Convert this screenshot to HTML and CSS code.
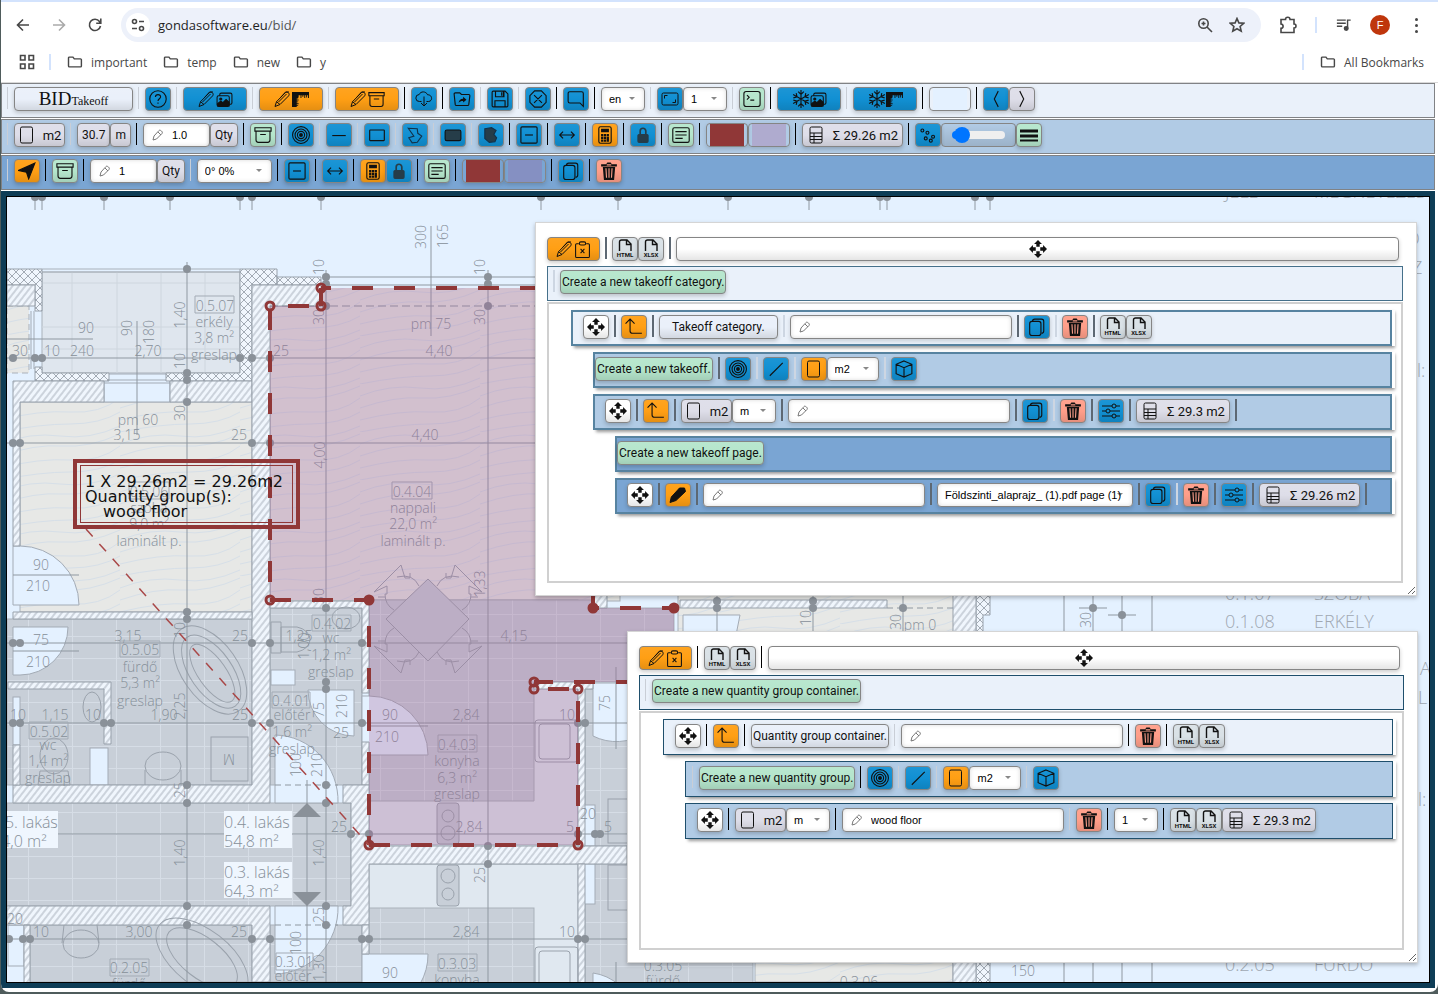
FILE: index.html
```html
<!DOCTYPE html>
<html lang="en">
<head>
    <meta charset="UTF-8">
    <meta name="viewport" content="width=device-width, initial-scale=1.0">
    <title>BID Takeoff</title>
    <link rel="stylesheet" href="styles.css">
</head>
<body>
    <!-- icon set -->
    <svg class="sprite" aria-hidden="true">
        <symbol id="back" viewBox="0 0 16 16"><path d="M14 8H3M8 2.500L2.500 8 8 13.500"/></symbol>
        <symbol id="forward" viewBox="0 0 16 16"><path d="M2 8h11M8 2.500L13.500 8 8 13.500"/></symbol>
        <symbol id="reload" viewBox="0 0 16 16"><path d="M13.500 9A5.600 5.600 0 1 1 12.500 4.500L13.500 6M13.800 1.500v4.700H9.200"/></symbol>
        <symbol id="tune" viewBox="0 0 16 16"><circle cx="4.500" cy="4.500" r="2"/><circle cx="11.500" cy="11.500" r="2"/><path d="M9 4.500h5M2 11.500h5"/></symbol>
        <symbol id="zoomin" viewBox="0 0 16 16"><circle cx="6.500" cy="6.500" r="4.700"/><path d="M10 10l5 5M4.500 6.500h4M6.500 4.500v4"/></symbol>
        <symbol id="star" viewBox="0 0 16 16"><path d="M8 1.500l1.900 4.400 4.800.4-3.600 3.200 1.100 4.700L8 11.700l-4.200 2.500 1.100-4.700L1.300 6.300l4.800-.4z"/></symbol>
        <symbol id="puzzle" viewBox="0 0 18 18"><path d="M2 3.500h4.500a2 2 0 0 1 4.500 0h4v4.500a2 2 0 0 1 0 4v4.500H2v-4.200c2.800-.3 2.800-4 0-4.300z"/></symbol>
        <symbol id="media" viewBox="0 0 18 16"><path d="M1 2.500h10M1 6h10M1 9.500h6M13 12V2.500h3.500"/><circle cx="11.500" cy="12" r="2" fill="currentColor"/></symbol>
        <symbol id="grid" viewBox="0 0 16 16"><path d="M1.500 1.500h4.500V6H1.500zM10 1.500h4.500V6H10zM1.500 10h4.500v4.500H1.500zM10 10h4.500v4.500H10z"/></symbol>
        <symbol id="folder" viewBox="0 0 18 16"><path d="M1.700 3.500a1 1 0 0 1 1-1h4l1.500 2h7a1 1 0 0 1 1 1v7a1 1 0 0 1-1 1H2.700a1 1 0 0 1-1-1z"/></symbol>

        <symbol id="help" viewBox="0 0 16 16"><circle cx="8" cy="8" r="7.300"/><path d="M5.700 6.200C5.900 3.300 10.500 3.600 10.300 6.200 10.200 7.700 8 7.900 8 9.800M8 11v1.300"/></symbol>
        <symbol id="pen" viewBox="0 0 18 16"><path d="M1 15.500l1.500-4.800L11 2c1-1.200 2.500-1 3.400-.2 1 .9 1 2.200.1 3.200L6 13.500zM2.500 10.700L6 13.500M6.500 6.500L11.500 1h3.500M4.500 11l8-8"/></symbol>
        <symbol id="penfill" viewBox="0 0 18 16"><path fill="currentColor" d="M1 15.500l1.300-5.500L10.500 1h5l1 3.500L7 13.500z"/></symbol>
        <symbol id="images" viewBox="0 0 16 16"><rect x="1" y="4.500" width="11.500" height="10" rx="1.500"/><path d="M3.500 4.500V3.500a1.500 1.500 0 0 1 1.500-1.500h8.500a1.500 1.500 0 0 1 1.500 1.500v7.500a1.500 1.500 0 0 1-1.500 1.500h-1"/><path fill="currentColor" d="M1.500 12l3-2.500 2 1.500 3-3 2.800 2.500v3.500H1.500z"/><circle cx="4.500" cy="7.500" r="1" fill="currentColor"/></symbol>
        <symbol id="ruler" viewBox="0 0 18 16"><path fill="currentColor" stroke="none" d="M0 0h18v6.500h-1V3.500h-1V6h-1V3.500h-1v3h-1v-3h-1V5h-1V3.500h-1v3H9v-3H7V6h-.5v1H5v1h2v1H5v1h1.500v1H5v1h2v1H5v1h1.500v1H5v1H0z"/></symbol>
        <symbol id="archive" viewBox="0 0 16 16"><path d="M.8 1.500h14.400v3H.8zM1.800 4.500v8a2 2 0 0 0 2 2h8.400a2 2 0 0 0 2-2v-8M5.500 7.500h5"/></symbol>
        <symbol id="cloud" viewBox="0 0 18 16"><path d="M6.500 10.500H4.500a3.500 3.500 0 0 1-.3-7C5.500 0 11 0 12.600 3.800c5-.3 5.300 6.700.9 6.700h-2M9 5.500V15M6 12l3 3 3-3"/></symbol>
        <symbol id="share" viewBox="0 0 16 16"><path d="M1 3.500a1 1 0 0 1 1-1h4l1.500 1.500H14a1 1 0 0 1 1 1l-1 8a1 1 0 0 1-1 .8H3a1 1 0 0 1-1-.8z"/><path fill="currentColor" stroke="none" d="M5 11.500c.2-2.500 1.500-3.700 4-3.800V6l3 2.600-3 2.600V9.700c-2 0-3 .5-4 1.800z"/></symbol>
        <symbol id="save" viewBox="0 0 16 16"><path d="M1 2a1 1 0 0 1 1-1h10.500L15 3.500V14a1 1 0 0 1-1 1H2a1 1 0 0 1-1-1zM3.500 15V9.500h9V15M4 1v5h7.500V1M9.500 2v3M11 1v5"/></symbol>
        <symbol id="octagon" viewBox="0 0 16 16"><path d="M5 .8h6L15.200 5v6L11 15.200H5L.8 11V5zM4.500 4.500l7 7M11.500 4.500l-7 7"/></symbol>
        <symbol id="chat" viewBox="0 0 16 16"><path d="M14.500 14.500l-3-3h-9a1.500 1.500 0 0 1-1.500-1.500V3a1.500 1.500 0 0 1 1.500-1.500H13A1.500 1.500 0 0 1 14.500 3z"/></symbol>
        <symbol id="full" viewBox="0 0 18 16"><rect x="1" y="2" width="16" height="12" rx="1.500"/><path d="M3.500 7.500v-3h3M14.500 8.500v3h-3"/></symbol>
        <symbol id="terminal" viewBox="0 0 16 16"><rect x=".8" y="1.300" width="14.400" height="13.400" rx="2"/><path d="M3.500 4.500l2 2-2 2M6.500 9h3.500"/></symbol>
        <symbol id="snow" viewBox="0 0 16 16"><path d="M8 0v16M1 4l14 8M1 12l14-8M5.500 1.500L8 4l2.500-2.500M5.500 14.500L8 12l2.500 2.500M1.200 7l3.300-1-.8-3.300M14.800 9l-3.300 1 .8 3.300M1.200 9l3.300 1-.8 3.300M14.800 7l-3.300-1 .8-3.300"/></symbol>
        <symbol id="left" viewBox="0 0 16 16"><path d="M10 1L6.500 8 10 15"/></symbol>
        <symbol id="right" viewBox="0 0 16 16"><path d="M6 1l3.500 7L6 15"/></symbol>
        <symbol id="portrait" viewBox="0 0 16 18"><rect x="1.500" y="1" width="12" height="16" rx="1.500"/></symbol>
        <symbol id="rings" viewBox="0 0 16 16"><circle cx="8" cy="8" r="7.500"/><circle cx="8" cy="8" r="5.300"/><circle cx="8" cy="8" r="3.200"/><circle cx="8" cy="8" r="1.200" fill="currentColor"/></symbol>
        <symbol id="hline" viewBox="0 0 16 16"><path d="M2 8.500h12"/></symbol>
        <symbol id="slash" viewBox="0 0 16 16"><path d="M2.500 14L14 2.500"/></symbol>
        <symbol id="rect" viewBox="0 0 16 16"><rect x="1.500" y="3.500" width="13" height="9.500" rx=".5"/></symbol>
        <symbol id="rectfill" viewBox="0 0 16 16"><rect x="1" y="3.500" width="14" height="9.500" rx="1.500" fill="#263d49"/></symbol>
        <symbol id="poly" viewBox="0 0 16 16"><path d="M2 2l8 .5.500 4 3.500 2.500-4 5.500-4.500.5-3-4.500L7 9z" stroke="#12324a"/></symbol>
        <symbol id="polyfill" viewBox="0 0 16 16"><path fill="#263d49" stroke="#12324a" d="M2.500 2.500l6-1 4 2.500-2 3.500 2.500 3-1.500 3.500-5 .5-4-3.500z"/></symbol>
        <symbol id="minus" viewBox="0 0 16 16"><rect x=".8" y=".8" width="14.400" height="14.400" rx="1"/><path d="M4.500 8h7"/></symbol>
        <symbol id="arrows" viewBox="0 0 16 16"><path d="M1.500 8h13M4.500 5l-3 3 3 3M11.500 5l3 3-3 3"/></symbol>
        <symbol id="calc" viewBox="0 0 16 16"><rect x="2.500" y=".7" width="11" height="14.600" rx="1.500"/><path fill="currentColor" stroke="none" d="M4.500 2.500h7v3h-7zM4.500 7h2v2h-2zM7 7h2v2H7zM9.500 7h2v2h-2zM4.500 9.500h2v2h-2zM7 9.500h2v2H7zM4.500 12h2v2h-2zM7 12h2v2H7zM9.500 9.500h2V14h-2z"/></symbol>
        <symbol id="lock" viewBox="0 0 16 16"><rect x="3.500" y="7.500" width="9" height="7" rx="1" fill="#263d49" stroke="#263d49"/><path stroke="#263d49" stroke-width="1.500" d="M5.500 7V4.500a2.500 2.500 0 0 1 5 0V7"/></symbol>
        <symbol id="card" viewBox="0 0 16 16"><rect x=".7" y="1.500" width="14.600" height="13" rx="1.500"/><path d="M3 5h10M3 8h10M3 11h6.500"/></symbol>
        <symbol id="table" viewBox="0 0 14 18"><rect x="1" y="1" width="12" height="16" rx="1.500"/><path d="M1 7h12M1 10.500h12M1 13.500h12M5 7v10"/></symbol>
        <symbol id="dots" viewBox="0 0 16 16"><circle cx="3" cy="4" r="1.300"/><circle cx="7.500" cy="6" r="1.300"/><circle cx="6" cy="11" r="1.300"/><circle cx="12.500" cy="9.500" r="1.300"/><circle cx="10.500" cy="13" r="1.300"/></symbol>
        <symbol id="bars" viewBox="0 0 18 16"><path stroke-width="3" d="M0 4h18M0 9h18"/><path stroke-width="2" d="M0 13.500h18"/></symbol>
        <symbol id="send" viewBox="0 0 16 16"><path fill="currentColor" d="M15 1L9.500 15 7.500 9 .5 7.500z"/></symbol>
        <symbol id="copy" viewBox="0 0 16 16"><rect x="1.500" y="3" width="10" height="12.500" rx="2"/><path d="M4 3a2 2 0 0 1 2-2h6a2 2 0 0 1 2 2v8.500a2 2 0 0 1-2 2"/></symbol>
        <symbol id="trash" viewBox="0 0 16 16"><path fill="currentColor" stroke="none" d="M1 2h4.500l1-1.500h3L10.500 2H15v2H1zM2.500 4.500h11L12.500 16h-9z"/><path stroke="#f89c88" d="M5.300 5.500l.5 8.500M8 5.500V14M10.700 5.500l-.5 8.500M6 2.500h4"/></symbol>
        <symbol id="clip" viewBox="0 0 16 16"><path d="M4.500 2.500h-2a1 1 0 0 0-1 1v11a1 1 0 0 0 1 1h11a1 1 0 0 0 1-1v-11a1 1 0 0 0-1-1h-2"/><rect x="5" y=".8" width="6" height="3" rx="1.500"/><path d="M6.200 7.500l3.600 4M9.800 7.500l-3.600 4"/></symbol>
        <symbol id="file" viewBox="0 0 18 20"><path stroke-width="1.400" d="M3.500 12V3a2 2 0 0 1 2-2H11l4 4v7M10.500 1.500v4h4"/></symbol>
        <symbol id="move" viewBox="0 0 16 16"><path fill="currentColor" stroke="none" d="M8 0l3.500 3.500H9.500v2.500H6.500V3.500h-2zM8 16l3.500-3.500H9.500V10H6.500v2.500h-2zM0 8l3.500-3.500v2H6v3H3.500v2zM16 8l-3.500-3.500v2H10v3h2.500v2z"/></symbol>
        <symbol id="up" viewBox="0 0 16 16"><path d="M4.500 1v10.500a2 2 0 0 0 2 2H15M.5 5l4-4 4 4"/></symbol>
        <symbol id="box" viewBox="0 0 16 16"><path d="M8 .8l7 3v8.400l-7 3-7-3V3.800zM1 3.800l7 3 7-3M8 6.800v8.400"/></symbol>
        <symbol id="sliders" viewBox="0 0 18 16"><path d="M0 3h10M14 3h4M0 8h4M8 8h10M0 13h10M14 13h4"/><circle cx="12" cy="3" r="2"/><circle cx="6" cy="8" r="2"/><circle cx="12" cy="13" r="2"/></symbol>
    </svg>

    <div class="browser">
        <header class="chrome">
            <div class="nav">
                <button class="tool" aria-label="Back"><svg><use href="#back"/></svg></button>
                <button class="tool dim" aria-label="Forward"><svg><use href="#forward"/></svg></button>
                <button class="tool" aria-label="Reload"><svg><use href="#reload"/></svg></button>
                <div class="omnibox">
                    <span class="site"><svg><use href="#tune"/></svg></span>
                    <span class="url">gondasoftware.eu<span class="path">/bid/</span></span>
                    <button class="tool" aria-label="Zoom"><svg><use href="#zoomin"/></svg></button>
                    <button class="tool" aria-label="Bookmark"><svg><use href="#star"/></svg></button>
                </div>
                <button class="tool ext" aria-label="Extensions"><svg><use href="#puzzle"/></svg></button>
                <span class="divider"></span>
                <button class="tool" aria-label="Media"><svg><use href="#media"/></svg></button>
                <button class="avatar">F</button>
                <button class="kebab" aria-label="Menu"><i></i><i></i><i></i></button>
            </div>
            <nav class="bookmarks">
                <svg><use href="#grid"/></svg>
                <span class="divider"></span>
                <a href="#"><svg><use href="#folder"/></svg>important</a>
                <a href="#"><svg><use href="#folder"/></svg>temp</a>
                <a href="#"><svg><use href="#folder"/></svg>new</a>
                <a href="#"><svg><use href="#folder"/></svg>y</a>
                <span class="grow"></span>
                <span class="divider"></span>
                <a class="all" href="#"><svg><use href="#folder"/></svg>All Bookmarks</a>
            </nav>
        </header>

        <main class="app">
            <div class="toolbar tone1">
                <i class="sep light"></i>
                <button class="btn plain logo"><span class="bid">BID</span><span class="takeoff">Takeoff</span></button>
                <i class="sep light"></i>
                <button class="btn blue" aria-label="Help"><svg><use href="#help"/></svg></button>
                <i class="sep light"></i>
                <button class="btn blue wide" aria-label="Images"><svg><use href="#pen"/></svg><svg><use href="#images"/></svg></button>
                <i class="sep light"></i>
                <button class="btn orange wide" aria-label="Measure"><svg><use href="#pen"/></svg><svg><use href="#ruler"/></svg></button>
                <i class="sep light"></i>
                <button class="btn orange wide" aria-label="Archive"><svg><use href="#pen"/></svg><svg><use href="#archive"/></svg></button>
                <i class="sep"></i>
                <button class="btn blue" aria-label="Download"><svg><use href="#cloud"/></svg></button>
                <i class="sep"></i>
                <button class="btn blue" aria-label="Open"><svg><use href="#share"/></svg></button>
                <i class="sep light"></i>
                <button class="btn blue" aria-label="Save"><svg><use href="#save"/></svg></button>
                <i class="sep light"></i>
                <button class="btn blue" aria-label="Close"><svg><use href="#octagon"/></svg></button>
                <i class="sep"></i>
                <button class="btn blue" aria-label="Message"><svg><use href="#chat"/></svg></button>
                <i class="sep"></i>
                <select class="field pick" aria-label="Language"><option>en</option></select>
                <i class="sep light"></i>
                <button class="btn blue" aria-label="Fit"><svg><use href="#full"/></svg></button>
                <select class="field pick" aria-label="Page"><option>1</option></select>
                <i class="sep light"></i>
                <button class="btn green" aria-label="Console"><svg><use href="#terminal"/></svg></button>
                <i class="sep"></i>
                <button class="btn blue wide" aria-label="Freeze images"><svg><use href="#snow"/></svg><svg><use href="#images"/></svg></button>
                <i class="sep light"></i>
                <button class="btn blue wide" aria-label="Freeze measures"><svg><use href="#snow"/></svg><svg><use href="#ruler"/></svg></button>
                <i class="sep"></i>
                <input type="color" class="swatch" value="#e4f1ff" aria-label="Background colour">
                <i class="sep"></i>
                <button class="btn blue" aria-label="Previous"><svg><use href="#left"/></svg></button>
                <button class="btn grey" aria-label="Next"><svg><use href="#right"/></svg></button>
            </div>

            <div class="toolbar tone2">
                <i class="sep light"></i>
                <button class="btn grey unit"><svg><use href="#portrait"/></svg>m2</button>
                <i class="sep light"></i>
                <button class="btn grey small">30.7</button>
                <button class="btn grey small">m</button>
                <i class="sep"></i>
                <input class="field pencil qty" id="qty1" value="1.0">
                <label class="btn grey small" for="qty1">Qty</label>
                <i class="sep"></i>
                <button class="btn green" aria-label="Archive"><svg><use href="#archive"/></svg></button>
                <i class="sep"></i>
                <button class="btn blue" aria-label="Point"><svg><use href="#rings"/></svg></button>
                <i class="sep light"></i>
                <button class="btn blue" aria-label="Line"><svg><use href="#hline"/></svg></button>
                <i class="sep light"></i>
                <button class="btn blue" aria-label="Rectangle"><svg><use href="#rect"/></svg></button>
                <i class="sep light"></i>
                <button class="btn blue" aria-label="Polyline"><svg><use href="#poly"/></svg></button>
                <i class="sep light"></i>
                <button class="btn blue" aria-label="Filled rectangle"><svg><use href="#rectfill"/></svg></button>
                <i class="sep light"></i>
                <button class="btn blue" aria-label="Filled polygon"><svg><use href="#polyfill"/></svg></button>
                <i class="sep"></i>
                <button class="btn blue" aria-label="Subtract"><svg><use href="#minus"/></svg></button>
                <i class="sep"></i>
                <button class="btn blue" aria-label="Width"><svg><use href="#arrows"/></svg></button>
                <i class="sep"></i>
                <button class="btn orange" aria-label="Calculate"><svg><use href="#calc"/></svg></button>
                <i class="sep"></i>
                <button class="btn blue" aria-label="Lock"><svg><use href="#lock"/></svg></button>
                <i class="sep"></i>
                <button class="btn green" aria-label="Note"><svg><use href="#card"/></svg></button>
                <i class="sep"></i>
                <input type="color" class="swatch" value="#903737" aria-label="Line colour">
                <input type="color" class="swatch" value="#afabcf" aria-label="Fill colour">
                <i class="sep"></i>
                <button class="btn grey sum"><svg><use href="#table"/></svg>Σ 29.26 m2</button>
                <i class="sep"></i>
                <button class="btn blue" aria-label="Points"><svg><use href="#dots"/></svg></button>
                <span class="slide"><input type="range" min="0" max="100" value="6" aria-label="Line width"></span>
                <button class="btn green" aria-label="Weight"><svg><use href="#bars"/></svg></button>
            </div>

            <div class="toolbar tone3">
                <i class="sep light"></i>
                <button class="btn orange" aria-label="Select"><svg><use href="#send"/></svg></button>
                <i class="sep"></i>
                <button class="btn green" aria-label="Archive"><svg><use href="#archive"/></svg></button>
                <i class="sep"></i>
                <input class="field pencil qty" id="qty2" value="1">
                <label class="btn grey small" for="qty2">Qty</label>
                <i class="sep light"></i>
                <select class="field pick slope" aria-label="Slope"><option>0° 0%</option></select>
                <i class="sep"></i>
                <button class="btn blue" aria-label="Subtract"><svg><use href="#minus"/></svg></button>
                <i class="sep"></i>
                <button class="btn blue" aria-label="Width"><svg><use href="#arrows"/></svg></button>
                <i class="sep"></i>
                <button class="btn orange" aria-label="Calculate"><svg><use href="#calc"/></svg></button>
                <button class="btn blue" aria-label="Lock"><svg><use href="#lock"/></svg></button>
                <i class="sep"></i>
                <button class="btn green" aria-label="Note"><svg><use href="#card"/></svg></button>
                <i class="sep"></i>
                <input type="color" class="swatch" value="#903737" aria-label="Line colour">
                <input type="color" class="swatch" value="#8590c2" aria-label="Fill colour">
                <i class="sep"></i>
                <button class="btn blue" aria-label="Copy"><svg><use href="#copy"/></svg></button>
                <i class="sep"></i>
                <button class="btn pink" aria-label="Delete"><svg><use href="#trash"/></svg></button>
            </div>

            <div class="workspace">
                <svg class="plan" viewBox="7 197 1422 785" preserveAspectRatio="xMinYMin slice">
                    <defs>
                        <pattern id="hatch" width="5" height="5" patternUnits="userSpaceOnUse" patternTransform="rotate(38)"><rect width="5" height="5" fill="#f0f6fd"/><path d="M1 0v5" stroke="#a9b1bb"/></pattern>
                        <pattern id="cross" width="8" height="8" patternUnits="userSpaceOnUse"><rect width="8" height="8" fill="#f0f6fd"/><path d="M0 0l8 8M8 0L0 8" stroke="#a3abb5"/></pattern>
                        <pattern id="tile" x="28" y="812" width="44" height="22" patternUnits="userSpaceOnUse"><rect width="44" height="22" fill="#c8cfd8"/><path d="M0 0h44M0 0v22" stroke="#d6dde6" stroke-width="2"/></pattern>
                        <pattern id="wood" width="120" height="48" patternUnits="userSpaceOnUse"><rect width="120" height="48" fill="#e7e8e6"/><path d="M0 12Q30 0 60 4T120 -6M0 24Q35 12 62 14T120 2M0 36Q40 26 70 28T120 14M0 48Q40 40 70 40T120 28M0 60Q30 48 60 52T120 42" fill="none" stroke="#d6dfe8"/></pattern>
                    </defs>

                    <rect x="7" y="197" width="1422" height="785" fill="#e4f1ff"/>

                    <!-- floors -->
                    <g stroke="#a9b1ba">
                        <rect x="42" y="272" width="198" height="101" fill="#dfe6ee"/>
                        <path d="M72 272v101M117 272v101M161 272v101M205 272v101M42 283h198M42 327h198M42 349h198" stroke="#ced6de"/>
                        <path d="M42 269h198M42 272h198" stroke="#a9b1ba"/>
                        <rect x="7" y="306" width="22" height="67" fill="url(#wood)" stroke-dasharray="6 4"/>
                        <rect x="20" y="402" width="232" height="210" fill="url(#wood)"/>
                        <rect x="270" y="306" width="350" height="295" fill="url(#wood)"/>
                        <rect x="321" y="288" width="300" height="20" fill="url(#wood)" stroke="none"/>
                        <rect x="678" y="590" width="276" height="50" fill="url(#wood)"/>
                        <rect x="755" y="940" width="198" height="42" fill="url(#wood)"/>
                        <rect x="7" y="619" width="245" height="166" fill="url(#tile)"/>
                        <rect x="7" y="803" width="344" height="103" fill="url(#tile)"/>
                        <rect x="30" y="925" width="222" height="57" fill="url(#tile)"/>
                        <rect x="270" y="608" width="92" height="177" fill="url(#tile)"/>
                        <rect x="270" y="925" width="92" height="57" fill="url(#tile)"/>
                        <rect x="369" y="600" width="209" height="245" fill="#e0e8f0"/>
                        <path d="M369 600H593V608H674V682H534V801H369z" fill="url(#tile)"/>
                        <rect x="585" y="689" width="60" height="157" fill="url(#tile)"/>
                        <rect x="369" y="864" width="209" height="120" fill="#e0e8f0"/>
                        <rect x="369" y="908" width="165" height="76" fill="url(#tile)"/>
                        <rect x="585" y="864" width="168" height="120" fill="url(#tile)"/>
                    </g>

                    <!-- doors and shafts -->
                    <g fill="#e4f1ff" stroke="#a3abb5">
                        <path d="M13 546h7a59 59 0 0 1 59 59H13zM13 627h55a48 48 0 0 1-48 48h-7z"/>
                        <path d="M275 803V735a64 66 0 0 1 63 68zM275 906v68a64 66 0 0 0 63-68z"/>
                        <path d="M308 690h46v46a46 46 0 0 1-46-46zM362 690h7v52h-7z"/>
                        <path d="M369 696a59 59 0 0 1 59 59h-66v-59zM369 954h59a59 59 0 0 1-8 30h-58v-30z"/>
                        <path d="M593 683h52v50a52 52 0 0 1-52 3zM683 615h57l-4 20h-53z"/>
                        <path d="M593 973a50 50 0 0 1 26 12h-26z"/>
                        <rect x="104" y="374" width="66" height="28"/>
                        <rect x="271" y="670" width="24" height="15"/>
                        <rect x="90" y="748" width="18" height="37"/>
                        <rect x="8" y="925" width="16" height="41"/>
                        <rect x="581" y="805" width="14" height="41"/>
                        <rect x="581" y="864" width="14" height="40"/>
                        <rect x="13" y="697" width="7" height="48"/>
                        <path d="M104 380h66M104 383h66M31 311v58M34 311v58"/>
                    </g>

                    <!-- walls -->
                    <g fill="url(#cross)" stroke="#98a1ab">
                        <path d="M7 269h35v42h-7v-26H7zM35 367h7v6h67v8H35zM166 373h74V269h37v16h-25v96h-86zM277 277h44v8h-44zM976 590h14v25h-7v20h-7zM976 960h14v25h-14z"/>
                    </g>
                    <g fill="url(#hatch)" stroke="#98a1ab">
                        <path d="M7 285h28v21H7zM13 381h91v21H20v144h-7zM170 381h82v21h-82z"/>
                        <path d="M252 285h69v21h-51v497H13v-18h239z"/>
                        <path d="M20 612h232v7H13v-7zM8 682h103v62h-7v-55H8zM13 745h7v40h-7z"/>
                        <path d="M270 601h99v92h-7v-85h-92zM362 742h7v43h-7z"/>
                        <path d="M343 785h26v61h258v18H369v61h-26v-19h8V803h-8z"/>
                        <path d="M7 906h263v76h-18v-57H7zM24 925h6v58h-6zM362 925h7v29h-7z"/>
                        <path d="M534 682h59v7h-8v157h-7V689h-44zM578 864h7v120h-7zM593 590h14v18h-14zM680 600h207v8H680zM953 590h23v45h-23zM953 960h23v25h-23z"/>
                    </g>

                    <!-- furniture -->
                    <g fill="none" stroke="#9aa2ac">
                        <g transform="rotate(55 210 670)"><ellipse cx="210" cy="670" rx="50" ry="28"/><ellipse cx="212" cy="670" rx="42" ry="21"/><ellipse cx="214" cy="670" rx="34" ry="14"/></g>
                        <g transform="rotate(38 202 958)"><ellipse cx="202" cy="958" rx="54" ry="28"/><ellipse cx="202" cy="958" rx="42" ry="20"/></g>
                        <ellipse cx="163" cy="766" rx="18" ry="14"/><path d="M145 770v15M181 770v15"/>
                        <rect x="211" y="737" width="37" height="44"/>
                        <ellipse cx="54" cy="756" rx="14" ry="18"/><path d="M38 785l2-14h28l2 14z"/>
                        <ellipse cx="92" cy="707" rx="9" ry="15"/>
                        <ellipse cx="81" cy="944" rx="18" ry="14"/><path d="M64 925l-2 18M97 925l2 18"/>
                        <path d="M271 622h10v31h-10zM281 627h16a18 13 0 0 1 0 25h-16z"/><ellipse cx="346" cy="618" rx="14" ry="11"/>
                        <path d="M428 579l41 40-41 42-42-42z" fill="#c8cfd8"/>
                        <path id="chair" d="M394 628q-9 5-9 16h2v8l-13-6 27 27 4-13 5 0v5M397 661q16 4 22-9M378 641h7"/>
                        <use href="#chair" transform="translate(856 0) scale(-1 1)"/>
                        <use href="#chair" transform="translate(0 1238) scale(1 -1)"/>
                        <use href="#chair" transform="translate(856 1238) scale(-1 -1)"/>
                        <rect x="535" y="720" width="43" height="42" rx="3"/><rect x="539" y="724" width="31" height="35" rx="3"/>
                        <rect x="535" y="947" width="43" height="42" rx="3"/><rect x="539" y="951" width="31" height="35" rx="3"/>
                        <g fill="#c8cfd8"><rect x="437" y="803" width="22" height="41" rx="3"/><circle cx="448" cy="816" r="6"/><circle cx="448" cy="833" r="7"/><rect x="437" y="865" width="22" height="41" rx="3"/><circle cx="448" cy="876" r="7"/><circle cx="448" cy="894" r="6"/></g>
                        <rect x="608" y="799" width="24" height="44"/><rect x="608" y="865" width="24" height="45"/>
                    </g>

                    <!-- dimension lines -->
                    <g stroke="#8f98a1" fill="none">
                        <path d="M7 358h528M7 443h528M7 643h362M369 643h265M7 723h620M7 834h362M369 834h258M7 939h620"/>
                        <path d="M187 262v720M326 270v712M488 270v712M137 321v114M431 226v110M307 780v202M326 277h209"/>
                        <path d="M7 339h86M13 575h66M13 651h66M369 726h59M326 285h209M616 667v82M616 962v20"/>
                        <path d="M35 197v13M42 197v13M104 197v13M170 197v13M240 197v13M252 197v13M321 197v13M541 197v13M618 197v13M728 197v13M809 197v13M880 197v13M887 197v13M975 197v13M990 197v13"/>
                        <path d="M717 596v35M813 596v35M903 596v35M1064 596v35M1093 596v35M1122 596v35M1152 596v35M1079 608h28M1108 615h28M1093 962v20M1122 962v20M1152 962v20M1064 962v20"/>
                        <path d="M270 306h265" stroke-dasharray="8 4"/>
                        <path d="M887 608h66M275 785h63M275 925h63" stroke-dasharray="6 4"/>
                    </g>
                    <g fill="#8a9199">
                        <circle cx="35" cy="197" r="4"/><circle cx="42" cy="197" r="4"/><circle cx="104" cy="197" r="4"/><circle cx="170" cy="197" r="4"/><circle cx="240" cy="197" r="4"/><circle cx="252" cy="197" r="4"/><circle cx="321" cy="197" r="4"/><circle cx="541" cy="197" r="4"/><circle cx="618" cy="197" r="4"/><circle cx="728" cy="197" r="4"/><circle cx="809" cy="197" r="4"/><circle cx="880" cy="197" r="4"/><circle cx="887" cy="197" r="4"/><circle cx="975" cy="197" r="4"/><circle cx="990" cy="197" r="4"/>
                        <circle cx="187" cy="269" r="4"/><circle cx="187" cy="373" r="4"/><circle cx="187" cy="380" r="4"/><circle cx="187" cy="402" r="4"/>
                        <circle cx="326" cy="277" r="4"/><circle cx="326" cy="284" r="4"/><circle cx="326" cy="306" r="4"/><circle cx="488" cy="277" r="4"/><circle cx="488" cy="284" r="4"/><circle cx="488" cy="306" r="4"/>
                        <circle cx="13" cy="358" r="4"/><circle cx="35" cy="358" r="4"/><circle cx="42" cy="358" r="4"/><circle cx="240" cy="358" r="4"/><circle cx="252" cy="358" r="4"/><circle cx="270" cy="358" r="4"/>
                        <circle cx="13" cy="443" r="4"/><circle cx="20" cy="443" r="4"/><circle cx="252" cy="443" r="4"/><circle cx="270" cy="443" r="4"/>
                        <circle cx="187" cy="612" r="4"/><circle cx="187" cy="619" r="4"/><circle cx="13" cy="643" r="4"/><circle cx="20" cy="643" r="4"/><circle cx="252" cy="643" r="4"/><circle cx="270" cy="643" r="4"/><circle cx="362" cy="643" r="4"/><circle cx="326" cy="608" r="4"/>
                        <circle cx="326" cy="682" r="4"/><circle cx="326" cy="689" r="4"/><circle cx="13" cy="723" r="4"/><circle cx="20" cy="723" r="4"/><circle cx="104" cy="723" r="4"/><circle cx="111" cy="723" r="4"/><circle cx="252" cy="723" r="4"/><circle cx="270" cy="723" r="4"/><circle cx="362" cy="723" r="4"/><circle cx="578" cy="723" r="4"/><circle cx="585" cy="723" r="4"/>
                        <circle cx="187" cy="785" r="4"/><circle cx="187" cy="803" r="4"/><circle cx="187" cy="906" r="4"/><circle cx="187" cy="925" r="4"/><circle cx="326" cy="785" r="4"/><circle cx="326" cy="803" r="4"/><circle cx="326" cy="906" r="4"/><circle cx="326" cy="925" r="4"/>
                        <circle cx="351" cy="834" r="4"/><circle cx="369" cy="834" r="4"/><circle cx="578" cy="834" r="4"/><circle cx="595" cy="834" r="4"/><circle cx="600" cy="834" r="4"/><circle cx="488" cy="846" r="4"/><circle cx="488" cy="864" r="4"/>
                        <circle cx="9" cy="939" r="4"/><circle cx="23" cy="939" r="4"/><circle cx="30" cy="939" r="4"/><circle cx="252" cy="939" r="4"/><circle cx="270" cy="939" r="4"/><circle cx="362" cy="939" r="4"/><circle cx="369" cy="939" r="4"/><circle cx="578" cy="939" r="4"/><circle cx="585" cy="939" r="4"/>
                        <circle cx="717" cy="601" r="4"/><circle cx="717" cy="608" r="4"/><circle cx="813" cy="601" r="4"/><circle cx="813" cy="608" r="4"/><circle cx="903" cy="608" r="4"/><circle cx="1093" cy="608" r="4"/><circle cx="1122" cy="615" r="4"/>
                        <path d="M307 803l14 14h-28zM307 906l14-14h-28z"/>
                    </g>

                    <!-- room labels and dimensions -->
                    <g class="room">
                        <text x="215" y="311">0.5.07</text><text x="214" y="327">erkély</text><text x="214" y="343">3,8 m²</text><text x="214" y="360">greslap</text>
                        <text x="412" y="497">0.4.04</text><text x="413" y="513">nappali</text><text x="413" y="529">22,0 m²</text><text x="413" y="546">laminált p.</text>
                        <text x="149" y="497">0.5.06</text><text x="149" y="513">szoba</text><text x="149" y="529">9,0 m²</text><text x="149" y="546">laminált p.</text>
                        <text x="140" y="655">0.5.05</text><text x="140" y="672">fürdő</text><text x="140" y="688">5,3 m²</text><text x="140" y="706">greslap</text>
                        <text x="49" y="737">0.5.02</text><text x="48" y="750">wc</text><text x="48" y="766">1,4 m²</text><text x="48" y="783">greslap</text>
                        <text x="332" y="629">0.4.02</text><text x="331" y="643">wc</text><text x="331" y="660">1,2 m²</text><text x="331" y="677">greslap</text>
                        <text x="291" y="706">0.4.01</text><text x="292" y="720">előtér</text><text x="292" y="737">1,6 m²</text><text x="292" y="754">greslap</text>
                        <text x="457" y="750">0.4.03</text><text x="457" y="766">konyha</text><text x="457" y="783">6,3 m²</text><text x="457" y="799">greslap</text>
                        <text x="457" y="969">0.3.03</text><text x="457" y="985">konyha</text>
                        <text x="129" y="973">0.2.05</text><text x="129" y="989">fürdő</text>
                        <text x="294" y="967">0.3.01</text><text x="293" y="981">előtér</text>
                        <text x="663" y="971">0.3.05</text><text x="663" y="986">fürdő</text><text x="859" y="987">0.3.06</text>
                        <text x="86" y="333">90</text><text x="82" y="356">240</text><text x="52" y="356">10</text><text x="20" y="356">30</text><text x="148" y="356">2,70</text><text x="281" y="356">25</text><text x="439" y="356">4,40</text>
                        <text x="431" y="329">pm 75</text><text x="138" y="425">pm 60</text><text x="127" y="440">3,15</text><text x="239" y="440">25</text><text x="425" y="440">4,40</text>
                        <text x="41" y="570">90</text><text x="38" y="591">210</text><text x="41" y="645">75</text><text x="38" y="667">210</text><text x="128" y="641">3,15</text><text x="240" y="641">25</text><text x="299" y="641">1,25</text><text x="514" y="641">4,15</text>
                        <text x="18" y="720">10</text><text x="55" y="720">1,15</text><text x="93" y="720">10</text><text x="164" y="720">1,90</text><text x="240" y="720">25</text><text x="390" y="720">90</text><text x="387" y="742">210</text><text x="466" y="720">2,84</text><text x="567" y="720">10</text><text x="341" y="738">25</text>
                        <text x="339" y="832">25</text><text x="469" y="832">2,84</text><text x="570" y="832">5</text><text x="588" y="819">20</text><text x="608" y="832">5</text>
                        <text x="41" y="937">10</text><text x="139" y="937">3,00</text><text x="239" y="937">25</text><text x="466" y="937">2,84</text><text x="567" y="937">10</text><text x="390" y="978">90</text><text x="15" y="924">20</text><text x="920" y="630">pm 0</text><text x="1023" y="976">150</text>
                        <text transform="translate(426 237) rotate(-90)">300</text><text transform="translate(448 236) rotate(-90)">165</text>
                        <text transform="translate(324 267) rotate(-90)">10</text><text transform="translate(485 267) rotate(-90)">10</text><text transform="translate(324 317) rotate(-90)">30</text><text transform="translate(485 317) rotate(-90)">30</text>
                        <text transform="translate(185 315) rotate(-90)">1,40</text><text transform="translate(132 328) rotate(-90)">90</text><text transform="translate(154 332) rotate(-90)">180</text><text transform="translate(185 361) rotate(-90)">10</text><text transform="translate(185 413) rotate(-90)">30</text>
                        <text transform="translate(325 455) rotate(-90)">4,00</text><text transform="translate(485 584) rotate(-90)">1,33</text><text transform="translate(324 596) rotate(-90)">30</text><text transform="translate(185 630) rotate(-90)">10</text><text transform="translate(185 706) rotate(-90)">2,25</text>
                        <text transform="translate(309 646) rotate(-90)">1,00</text><text transform="translate(324 710) rotate(-90)">75</text><text transform="translate(347 706) rotate(-90)">210</text><text transform="translate(185 790) rotate(-90)">25</text><text transform="translate(301 765) rotate(-90)">100</text><text transform="translate(322 765) rotate(-90)">210</text>
                        <text transform="translate(185 853) rotate(-90)">1,40</text><text transform="translate(324 853) rotate(-90)">1,40</text><text transform="translate(485 875) rotate(-90)">25</text><text transform="translate(324 915) rotate(-90)">25</text><text transform="translate(301 943) rotate(-90)">100</text><text transform="translate(324 968) rotate(-90)">1,30</text>
                        <text transform="translate(610 703) rotate(-90)">75</text><text transform="translate(811 618) rotate(-90)">10</text><text transform="translate(901 622) rotate(-90)">30</text><text transform="translate(1091 620) rotate(-90)">30</text><text transform="translate(229 754) rotate(180)">M</text>
                    </g>
                    <g fill="none" stroke="#a3abb5">
                        <path d="M195 296h39v17h-39zM392 482h40v17h-40zM129 482h40v17h-40zM120 641h40v16h-40zM29 722h39v17H29zM312 615h39v16h-39zM272 692h38v16h-38zM438 735h39v17h-39zM438 954h39v17h-39zM110 959h39v17h-39zM276 953h37v17h-37z"/>
                    </g>
                    <g fill="#eff6fe"><rect x="7" y="811" width="51" height="37"/><rect x="224" y="811" width="68" height="37"/><rect x="224" y="862" width="68" height="36"/></g>
                    <g class="flat">
                        <text x="-8" y="828">0.5. lakás</text><text x="-8" y="847">54,0 m²</text>
                        <text x="224" y="828">0.4. lakás</text><text x="224" y="847">54,8 m²</text>
                        <text x="224" y="878">0.3. lakás</text><text x="224" y="897">64,3 m²</text>
                    </g>
                    <g class="legend">
                        <text x="1225" y="198">JELE</text><text x="1314" y="198">MEGNEVEZÉS</text>
                        <text x="1225" y="600">0.1.07</text><text x="1314" y="600">SZOBA</text>
                        <text x="1225" y="628">0.1.08</text><text x="1314" y="628">ERKÉLY</text>
                        <text x="1225" y="971">0.2.05</text><text x="1314" y="971">FÜRDŐ</text>
                        <text x="1406" y="245">O</text><text x="1412" y="274">Z</text><text x="1417" y="377">l:</text>
                        <text x="1420" y="675">A</text><text x="1418" y="704">L</text><text x="1408" y="806">Él:</text>
                    </g>

                    <!-- measured area -->
                    <path fill="#a16399" fill-opacity=".3" d="M270 306h51v-18h272v320h81v74H534v7h44v156H369V600h-99z"/>
                    <g class="outline">
                        <path d="M321 288h299" stroke-dashoffset="11"/>
                        <path d="M321 288v18"/>
                        <path d="M270 306h51" stroke-dashoffset="24"/>
                        <path d="M270 306v294" stroke-dashoffset="39"/>
                        <path d="M270 600h99"/>
                        <path d="M369 600v245" stroke-dashoffset="16"/>
                        <path d="M369 845h209"/>
                        <path d="M578 689v156" stroke-dashoffset="30"/>
                        <path d="M534 682h140" stroke-dashoffset="2"/>
                        <path d="M534 689h44" stroke-dashoffset="28"/>
                        <path d="M593 590v18"/>
                        <path d="M593 608h81" stroke-dashoffset="15"/>
                    </g>
                    <g fill="none" stroke="#903737" stroke-width="3">
                        <circle cx="270" cy="306" r="4"/><circle cx="321" cy="288" r="4"/><circle cx="321" cy="306" r="4"/><circle cx="270" cy="600" r="4"/><circle cx="534" cy="682" r="4"/><circle cx="534" cy="689" r="4"/><circle cx="578" cy="689" r="4"/><circle cx="578" cy="845" r="4"/><circle cx="369" cy="845" r="4"/>
                        <g fill="#903737"><circle cx="369" cy="600" r="4"/><circle cx="593" cy="608" r="4"/><circle cx="674" cy="608" r="4"/></g>
                    </g>
                    <path d="M86 529L369 845" stroke="#a94848" stroke-width="1.500" stroke-dasharray="10 10"/>
                    <g fill="none" stroke="#903737"><rect x="75" y="461" width="223" height="66" stroke-width="4"/><rect x="80.500" y="465.500" width="212" height="57"/></g>
                    <g class="note">
                        <text x="85" y="487">1 X 29.26m2 = 29.26m2</text>
                        <text x="85" y="502">Quantity group(s):</text>
                        <text x="103" y="517">wood floor</text>
                    </g>
                </svg>

                <section class="panel takeoffs">
                    <div class="head">
                        <button class="btn orange clip" aria-label="Edit"><svg><use href="#pen"/></svg><svg><use href="#clip"/></svg></button>
                        <i class="sep"></i>
                        <button class="btn silver"><svg><use href="#file"/></svg><span>HTML</span></button>
                        <button class="btn silver"><svg><use href="#file"/></svg><span>XLSX</span></button>
                        <i class="sep"></i>
                        <button class="btn white drag" aria-label="Move panel"><svg><use href="#move"/></svg></button>
                    </div>
                    <div class="topbar tone1">
                        <i class="sep light"></i>
                        <button class="btn green text">Create a new takeoff category.</button>
                    </div>
                    <div class="tree">
                        <div class="row tone1">
                            <button class="btn white" aria-label="Move"><svg><use href="#move"/></svg></button>
                            <i class="sep"></i>
                            <button class="btn orange" aria-label="Up"><svg><use href="#up"/></svg></button>
                            <i class="sep"></i>
                            <button class="btn plain text cat">Takeoff category.</button>
                            <i class="sep light"></i>
                            <input class="field pencil name" aria-label="Category name">
                            <i class="sep"></i>
                            <button class="btn blue" aria-label="Copy"><svg><use href="#copy"/></svg></button>
                            <i class="sep light"></i>
                            <button class="btn pink" aria-label="Delete"><svg><use href="#trash"/></svg></button>
                            <i class="sep"></i>
                            <button class="btn silver"><svg><use href="#file"/></svg><span>HTML</span></button>
                            <button class="btn silver"><svg><use href="#file"/></svg><span>XLSX</span></button>
                        </div>
                        <div class="row level1 flush tone2">
                            <button class="btn green text">Create a new takeoff.</button>
                            <i class="sep"></i>
                            <button class="btn blue" aria-label="Point"><svg><use href="#rings"/></svg></button>
                            <i class="sep light"></i>
                            <button class="btn blue" aria-label="Line"><svg><use href="#slash"/></svg></button>
                            <i class="sep light"></i>
                            <button class="btn orange" aria-label="Area"><svg><use href="#portrait"/></svg></button>
                            <select class="field pick unitpick" aria-label="Unit"><option>m2</option></select>
                            <i class="sep light"></i>
                            <button class="btn blue" aria-label="Volume"><svg><use href="#box"/></svg></button>
                        </div>
                        <div class="row level1 tone2">
                            <button class="btn white" aria-label="Move"><svg><use href="#move"/></svg></button>
                            <i class="sep"></i>
                            <button class="btn orange" aria-label="Up"><svg><use href="#up"/></svg></button>
                            <i class="sep"></i>
                            <button class="btn grey unit"><svg><use href="#portrait"/></svg>m2</button>
                            <select class="field pick" aria-label="Scale unit"><option>m</option></select>
                            <i class="sep"></i>
                            <input class="field pencil name" aria-label="Takeoff name">
                            <i class="sep"></i>
                            <button class="btn blue" aria-label="Copy"><svg><use href="#copy"/></svg></button>
                            <i class="sep light"></i>
                            <button class="btn pink" aria-label="Delete"><svg><use href="#trash"/></svg></button>
                            <i class="sep"></i>
                            <button class="btn blue" aria-label="Settings"><svg><use href="#sliders"/></svg></button>
                            <i class="sep"></i>
                            <button class="btn grey sum"><svg><use href="#table"/></svg>Σ 29.3 m2</button>
                            <i class="sep"></i>
                        </div>
                        <div class="row level2 flush tone3">
                            <button class="btn green text">Create a new takeoff page.</button>
                        </div>
                        <div class="row level2 tone3">
                            <button class="btn white" aria-label="Move"><svg><use href="#move"/></svg></button>
                            <i class="sep"></i>
                            <button class="btn orange" aria-label="Draw"><svg><use href="#penfill"/></svg></button>
                            <i class="sep"></i>
                            <input class="field pencil name" aria-label="Page name">
                            <i class="sep"></i>
                            <select class="field pick pdf" aria-label="PDF page"><option>Földszinti_alaprajz_ (1).pdf page (1)</option></select>
                            <i class="sep"></i>
                            <button class="btn blue" aria-label="Copy"><svg><use href="#copy"/></svg></button>
                            <i class="sep light"></i>
                            <button class="btn pink" aria-label="Delete"><svg><use href="#trash"/></svg></button>
                            <i class="sep"></i>
                            <button class="btn blue" aria-label="Settings"><svg><use href="#sliders"/></svg></button>
                            <i class="sep"></i>
                            <button class="btn grey sum"><svg><use href="#table"/></svg>Σ 29.26 m2</button>
                            <i class="sep"></i>
                        </div>
                    </div>
                </section>

                <section class="panel groups">
                    <div class="head">
                        <button class="btn orange clip" aria-label="Edit"><svg><use href="#pen"/></svg><svg><use href="#clip"/></svg></button>
                        <i class="sep"></i>
                        <button class="btn silver"><svg><use href="#file"/></svg><span>HTML</span></button>
                        <button class="btn silver"><svg><use href="#file"/></svg><span>XLSX</span></button>
                        <i class="sep"></i>
                        <button class="btn white drag" aria-label="Move panel"><svg><use href="#move"/></svg></button>
                    </div>
                    <div class="topbar tone1">
                        <i class="sep light"></i>
                        <button class="btn green text">Create a new quantity group container.</button>
                    </div>
                    <div class="tree">
                        <div class="row tone1">
                            <button class="btn white" aria-label="Move"><svg><use href="#move"/></svg></button>
                            <i class="sep"></i>
                            <button class="btn orange" aria-label="Up"><svg><use href="#up"/></svg></button>
                            <i class="sep"></i>
                            <button class="btn plain text">Quantity group container.</button>
                            <i class="sep light"></i>
                            <input class="field pencil name" aria-label="Container name">
                            <i class="sep"></i>
                            <button class="btn pink" aria-label="Delete"><svg><use href="#trash"/></svg></button>
                            <i class="sep"></i>
                            <button class="btn silver"><svg><use href="#file"/></svg><span>HTML</span></button>
                            <button class="btn silver"><svg><use href="#file"/></svg><span>XLSX</span></button>
                        </div>
                        <div class="row level1 flush tone2">
                            <i class="sep light"></i>
                            <button class="btn green text">Create a new quantity group.</button>
                            <i class="sep"></i>
                            <button class="btn blue" aria-label="Point"><svg><use href="#rings"/></svg></button>
                            <i class="sep light"></i>
                            <button class="btn blue" aria-label="Line"><svg><use href="#slash"/></svg></button>
                            <i class="sep light"></i>
                            <button class="btn orange" aria-label="Area"><svg><use href="#portrait"/></svg></button>
                            <select class="field pick unitpick" aria-label="Unit"><option>m2</option></select>
                            <i class="sep light"></i>
                            <button class="btn blue" aria-label="Volume"><svg><use href="#box"/></svg></button>
                        </div>
                        <div class="row level1 tone2">
                            <button class="btn white" aria-label="Move"><svg><use href="#move"/></svg></button>
                            <i class="sep"></i>
                            <button class="btn grey unit"><svg><use href="#portrait"/></svg>m2</button>
                            <select class="field pick" aria-label="Scale unit"><option>m</option></select>
                            <i class="sep"></i>
                            <input class="field pencil name" value="wood floor" aria-label="Group name">
                            <i class="sep light"></i>
                            <button class="btn pink" aria-label="Delete"><svg><use href="#trash"/></svg></button>
                            <i class="sep"></i>
                            <select class="field pick" aria-label="Order"><option>1</option></select>
                            <i class="sep"></i>
                            <button class="btn silver"><svg><use href="#file"/></svg><span>HTML</span></button>
                            <button class="btn silver"><svg><use href="#file"/></svg><span>XLSX</span></button>
                            <button class="btn grey sum"><svg><use href="#table"/></svg>Σ 29.3 m2</button>
                        </div>
                    </div>
                </section>
            </div>
        </main>
    </div>
</body>
</html>
```
FILE: styles.css
```css
* {
    box-sizing: border-box;
}
body {
    margin: 0;
    height: 100vh;
    padding: 0 0 2px 1px;
    background: #4f5c5c;
    font-family: Roboto, sans-serif;
    overflow: hidden;
}
.sprite {
    display: none;
}
svg {
    fill: none;
    stroke: currentColor;
}
.browser {
    height: 100%;
    display: flex;
    flex-direction: column;
    background: #fff;
    border-radius: 0 0 8px 8px;
    overflow: hidden;
}

/* browser header */
.chrome {
    border-top: 2px solid #d3e3fd;
    border-bottom: 1px solid #d9d9d9;
    font-family: "Open Sans", sans-serif;
    color: #474747;
}
.nav {
    display: flex;
    align-items: center;
    height: 46px;
    padding: 0 12px 0 14px;
}
.tool {
    width: 16px;
    height: 16px;
    padding: 0;
    margin-right: 20px;
    border: none;
    background: none;
    color: #474747;
}
.tool svg {
    display: block;
    width: 16px;
    height: 16px;
    stroke-width: 1.6;
}
.tool.dim {
    color: #aaa;
}
.tool.ext,
.tool.ext svg {
    width: 18px;
    height: 18px;
}
.omnibox {
    flex: 1;
    display: flex;
    align-items: center;
    height: 34px;
    margin-right: 18px;
    margin-left: -2px;
    padding: 0 16px 0 5px;
    border-radius: 17px;
    background: #edf1fa;
}
.omnibox .tool {
    margin-right: 0;
    margin-left: 16px;
}
.site {
    width: 24px;
    height: 24px;
    padding: 4px;
    margin-right: 8px;
    border-radius: 12px;
    background: #fff;
}
.site svg {
    display: block;
    width: 16px;
    height: 16px;
    stroke-width: 1.6;
}
.url {
    flex: 1;
    font-size: 13px;
    color: #1f1f1f;
}
.path {
    color: #555;
}
.divider {
    width: 2px;
    height: 16px;
    background: #d3e3fd;
}
.nav .divider {
    margin-left: -2px;
    margin-right: 19px;
}
.avatar {
    width: 20px;
    height: 20px;
    padding: 0;
    margin-left: -2px;
    border: none;
    border-radius: 10px;
    background: #bf360c;
    color: #fff;
    font-size: 11px;
}
.kebab {
    display: flex;
    flex-direction: column;
    align-items: center;
    gap: 3px;
    width: 20px;
    margin-left: 16px;
    padding: 0;
    border: none;
    background: none;
}
.kebab i {
    width: 3px;
    height: 3px;
    border-radius: 2px;
    background: #474747;
}
.bookmarks {
    display: flex;
    align-items: center;
    height: 34px;
    padding: 0 14px 6px 18px;
}
.bookmarks svg {
    width: 16px;
    height: 16px;
    stroke-width: 1.6;
}
.bookmarks .divider {
    margin: 0 16px 0 14px;
}
.bookmarks a {
    display: flex;
    align-items: center;
    gap: 8px;
    margin-right: 16px;
    font-size: 12px;
    color: #474747;
    text-decoration: none;
}
.bookmarks a.all {
    margin-right: 0;
}
.grow {
    flex: 1;
}

/* toolbars */
.app {
    flex: 1;
    display: flex;
    flex-direction: column;
    gap: 1px;
    margin: 0 3px 4px 0;
    min-height: 0;
}
.toolbar {
    display: flex;
    align-items: flex-start;
    height: 35px;
    padding: 3px 0;
    border: 1px solid #808285;
    overflow: hidden;
}
.tone1 {
    background: #eaf1fa;
}
.tone2 {
    background: #b1cbe5;
}
.tone3 {
    background: #7aa5d3;
}
.sep {
    flex: none;
    width: 1px;
    height: 22px;
    margin: 0 6px 0 5px;
    background: #000;
}
.sep.light {
    background: #c9ced6;
}
.btn {
    flex: none;
    display: flex;
    align-items: center;
    justify-content: center;
    width: 26px;
    height: 24px;
    padding: 0;
    border: 1px solid #858585;
    border-radius: 4px;
    background-image: linear-gradient(rgba(255, 255, 255, 0.05), transparent 50%, rgba(0, 0, 0, 0.1));
    box-shadow: 0 2px 4px rgba(0, 0, 0, 0.2);
    font-family: Roboto, sans-serif;
    font-size: 12px;
    color: #111;
}
.btn svg {
    width: 18px;
    height: 18px;
}
.blue {
    background-color: #1190d3;
}
.orange {
    background-color: #ff9f14;
}
.green {
    background-color: #b5e6cc;
}
.grey {
    background-color: #dedee9;
}
.silver {
    background-color: #d9e1e6;
}
.pink {
    background-color: #ff9e89;
}
.white {
    background-color: #fff;
}
.plain {
    background-color: #eaf0fa;
}
.wide {
    width: 64px;
}
.wide svg + svg,
.clip svg + svg {
    width: 17px;
    height: 17px;
}
.logo {
    width: 119px;
    align-items: baseline;
    font-family: "Liberation Serif", serif;
}
.bid {
    font-size: 19px;
    line-height: 22px;
}
.takeoff {
    font-size: 12px;
}
.small {
    width: auto;
    padding: 0 4px;
}
.unit {
    width: 51px;
    gap: 7px;
    font-size: 13px;
}
.sum {
    width: auto;
    padding: 0 4px;
    gap: 8px;
    font-size: 13px;
}
.text {
    width: auto;
    padding: 0 1px;
}
.text.cat {
    padding: 0 12px;
}
.clip {
    width: 53px;
}
.silver {
    flex-direction: column;
}
.silver svg {
    width: 18px;
    height: 20px;
    margin-bottom: -8px;
}
.silver span {
    font-size: 6px;
    font-weight: bold;
    line-height: 8px;
}

/* fields */
.field {
    flex: none;
    height: 24px;
    border: 1px solid #858585;
    border-radius: 4px;
    background-color: #fff;
    box-shadow: inset 0 0 4px rgba(0, 0, 0, 0.15), 0 2px 4px rgba(0, 0, 0, 0.15);
    font-family: "Liberation Sans", Arial, sans-serif;
    font-size: 11px;
    color: #000;
}
.pencil {
    padding: 0 4px 0 28px;
    background-image: url("data:image/svg+xml,%3Csvg xmlns='http://www.w3.org/2000/svg' viewBox='0 0 12 12' fill='none' stroke='%23777'%3E%3Cpath d='M1 11l1-4 5-5.500c1-1.200 4.500 1.500 3 3L4.500 10zM6 3l3 3'/%3E%3C/svg%3E");
    background-repeat: no-repeat;
    background-position: 8px center;
    background-size: 12px 12px;
}
.qty {
    width: 67px;
}
.name {
    width: 222px;
}
.pick {
    appearance: none;
    width: 44px;
    padding: 0 0 0 7px;
    background-image: url("data:image/svg+xml,%3Csvg xmlns='http://www.w3.org/2000/svg' viewBox='0 0 6 4'%3E%3Cpath d='M0 0h6L3 3z' fill='%23888'/%3E%3C/svg%3E");
    background-repeat: no-repeat;
    background-position: right 9px center;
    background-size: 6px 4px;
}
.slope {
    width: 75px;
}
.unitpick {
    width: 52px;
}
.pdf {
    width: 196px;
}
.swatch {
    flex: none;
    width: 42px;
    height: 24px;
    padding: 0 3px;
    border: 1px solid #858585;
    border-radius: 4px;
    background: transparent;
    box-shadow: 0 2px 4px rgba(0, 0, 0, 0.15);
}
.swatch::-webkit-color-swatch-wrapper {
    padding: 0;
}
.swatch::-webkit-color-swatch {
    border: none;
    border-radius: 0;
}
.slide {
    flex: none;
    display: flex;
    align-items: center;
    justify-content: center;
    width: 75px;
    height: 24px;
    border: 1px solid #858585;
    border-radius: 4px;
    background-image: linear-gradient(transparent, rgba(0, 0, 0, 0.12));
}
.slide input {
    appearance: none;
    width: 53px;
    height: 8px;
    margin: 0;
    border-radius: 4px;
    background: linear-gradient(to right, #0075ff 12px, #efefef 12px);
}
.slide input::-webkit-slider-thumb {
    appearance: none;
    width: 16px;
    height: 16px;
    border-radius: 8px;
    background: #0075ff;
}

/* drawing area */
.workspace {
    flex: 1;
    position: relative;
    min-height: 0;
    border: 5px solid #0e3d56;
    outline: 1px solid #000;
    outline-offset: -6px;
    overflow: hidden;
}
.plan {
    position: absolute;
    top: 1px;
    left: 1px;
    width: calc(100% - 2px);
    height: calc(100% - 2px);
    stroke: none;
}
.plan text {
    stroke: none;
}
.room,
.flat,
.legend {
    font-family: "Open Sans", sans-serif;
    font-weight: 300;
    fill: #868f99;
}
.room {
    font-size: 14px;
    text-anchor: middle;
}
.flat {
    font-size: 16px;
}
.legend {
    font-size: 18px;
    fill: #a0a8b2;
}
.outline {
    fill: none;
    stroke: #903737;
    stroke-width: 4px;
    stroke-dasharray: 21 21;
}
.note {
    font-family: "DejaVu Sans", Verdana, sans-serif;
    font-size: 16px;
    fill: #111;
}

/* floating panels */
.panel {
    position: absolute;
    display: flex;
    flex-direction: column;
    padding: 14px 13px 12px 11px;
    border: 1px solid #d5d5d5;
    background: #fff;
    box-shadow: 0 2px 4px rgba(0, 0, 0, 0.25);
    resize: both;
    overflow: hidden;
}
.takeoffs {
    top: 26px;
    left: 529px;
    right: 13px;
    height: 374px;
}
.groups {
    top: 435px;
    left: 621px;
    right: 12px;
    height: 332px;
}
.head {
    display: flex;
    margin: 0 4px 5px 0;
}
.drag {
    flex: 1;
}
.topbar {
    display: flex;
    align-items: flex-start;
    height: 35px;
    margin-bottom: 1px;
    padding: 3px 0;
    border: 1px solid #45708a;
}
.tree {
    flex: 1;
    display: flex;
    flex-direction: column;
    gap: 6px;
    padding: 6px 9px 0 22px;
    border: 2px solid #d0d0d0;
}
.row {
    display: flex;
    align-items: flex-start;
    height: 36px;
    padding: 3px 0 3px 10px;
    border: 2px solid #5783a0;
    box-shadow: 3px 0 0 #fff, 3px 2px 3px rgba(0, 0, 0, 0.4);
}
.level1 {
    margin-left: 22px;
}
.level2 {
    margin-left: 44px;
}
.flush {
    padding-left: 0;
}
.takeoffs .sep {
    width: 2px;
    margin: 0 5px;
    background: #5d6873;
}
.takeoffs .sep.light {
    background: #cdd6e2;
}
.groups .row,
.groups .topbar {
    border-width: 1px;
    border-color: #1f4f6c;
}
.groups .row {
    padding: 4px 0 4px 11px;
}
.groups .flush {
    padding-left: 1px;
}
```
